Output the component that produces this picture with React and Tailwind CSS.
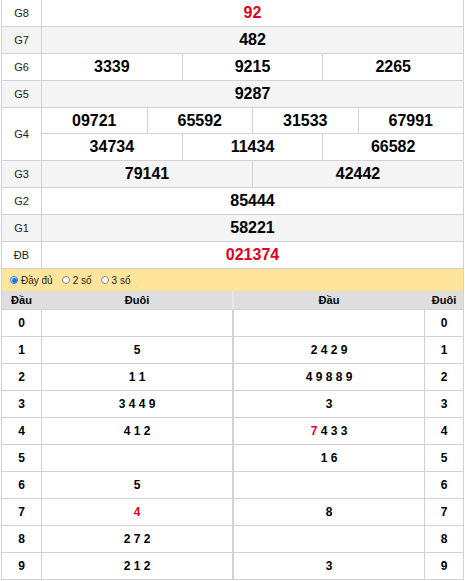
import React from "react";

const RED = "text-[#e4001b]";

function Row({ label, gray, children, last }) {
  return (
    <div className={`flex border-b border-[#d2d2d2] ${gray ? "bg-[#f4f4f4]" : "bg-white"}`}>
      <div className="w-[40px] shrink-0 border-r border-[#d2d2d2] flex items-center justify-center text-[11px] text-[#222]">
        {label}
      </div>
      <div className="flex-1 flex flex-col">{children}</div>
    </div>
  );
}

function Cells({ values, red, border }) {
  return (
    <div className={`flex h-[26px] ${border ? "border-b border-[#d2d2d2]" : ""}`}>
      {values.map((v, i) => (
        <div
          key={i}
          className={`flex-1 basis-0 flex items-center justify-center text-[16px] font-bold ${red ? RED : "text-black"} ${i > 0 ? "border-l border-[#d2d2d2]" : ""}`}
        >
          {v}
        </div>
      ))}
    </div>
  );
}

function Radio({ checked, label }) {
  return (
    <div className="flex items-center mr-[9px]">
      {checked ? (
        <span className="w-[8px] h-[8px] rounded-full border border-[#1a73e8] bg-white flex items-center justify-center">
          <span className="w-[5px] h-[5px] rounded-full bg-[#1a73e8]" />
        </span>
      ) : (
        <span className="w-[8px] h-[8px] rounded-full border border-[#8a8a8a] bg-white" />
      )}
      <span className="ml-[3px] text-[10px] text-[#222]">{label}</span>
    </div>
  );
}

const left = [
  [""],
  ["5"],
  ["1 1"],
  ["3 4 4 9"],
  ["4 1 2"],
  [""],
  ["5"],
  [{ t: "4", r: true }],
  ["2 7 2"],
  ["2 1 2"],
];
const right = [
  [""],
  ["2 4 2 9"],
  ["4 9 8 8 9"],
  ["3"],
  [{ t: "7", r: true }, " 4 3 3"],
  ["1 6"],
  [""],
  ["8"],
  [""],
  ["3"],
];

function Parts({ parts }) {
  return (
    <>
      {parts.map((p, i) =>
        typeof p === "string" ? (
          <span key={i} className="whitespace-pre">{p}</span>
        ) : (
          <span key={i} className={RED}>{p.t}</span>
        )
      )}
    </>
  );
}

export default function App() {
  return (
    <div
      className="w-[465px] h-[581px] bg-white overflow-hidden"
      style={{ fontFamily: '"Liberation Sans", Arial, sans-serif' }}
    >
      <div className="ml-px w-[463px] border-x border-[#d2d2d2]">
        <Row label="G8">
          <Cells values={["92"]} red />
        </Row>
        <Row label="G7" gray>
          <Cells values={["482"]} />
        </Row>
        <Row label="G6">
          <Cells values={["3339", "9215", "2265"]} />
        </Row>
        <Row label="G5" gray>
          <Cells values={["9287"]} />
        </Row>
        <Row label="G4">
          <Cells values={["09721", "65592", "31533", "67991"]} border />
          <Cells values={["34734", "11434", "66582"]} />
        </Row>
        <Row label="G3" gray>
          <Cells values={["79141", "42442"]} />
        </Row>
        <Row label="G2">
          <Cells values={["85444"]} />
        </Row>
        <Row label="G1" gray>
          <Cells values={["58221"]} />
        </Row>
        <Row label="ĐB">
          <Cells values={["021374"]} red />
        </Row>

        <div className="h-[22px] bg-[#ffe59b] flex items-center pl-[8px]">
          <Radio checked label="Đầy đủ" />
          <Radio label="2 số" />
          <Radio label="3 số" />
        </div>

        <div className="flex h-[19px] bg-[#dedede] border-b border-[#d2d2d2] text-[11px] font-bold text-black">
          <div className="w-[40px] border-r border-[#dedede] flex items-center justify-center">Đầu</div>
          <div className="w-[191px] border-r border-[#e8e8e8] flex items-center justify-center">Đuôi</div>
          <div className="w-[191px] border-l border-[#e8e8e8] flex items-center justify-center">Đầu</div>
          <div className="w-[39px] border-l border-[#dedede] flex items-center justify-center">Đuôi</div>
        </div>

        {left.map((l, i) => (
          <div key={i} className="flex h-[27px] border-b border-[#d2d2d2] text-[12px] font-bold text-black">
            <div className="w-[40px] border-r border-[#d2d2d2] flex items-center justify-center">{i}</div>
            <div className="w-[191px] border-r border-[#d2d2d2] flex items-center justify-center">
              <Parts parts={l} />
            </div>
            <div className="w-[191px] border-l border-[#d2d2d2] flex items-center justify-center">
              <Parts parts={right[i]} />
            </div>
            <div className="w-[39px] border-l border-[#d2d2d2] flex items-center justify-center">{i}</div>
          </div>
        ))}
      </div>
    </div>
  );
}
